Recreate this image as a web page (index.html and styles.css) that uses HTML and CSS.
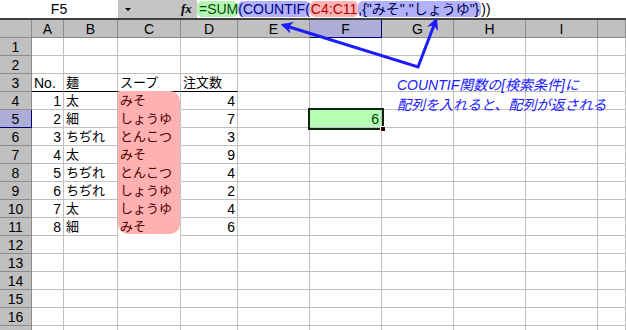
FILE: index.html
```html
<!DOCTYPE html>
<html>
<head>
	<meta charset="utf-8">
	<title>COUNTIF</title>
	<link rel="stylesheet" href="styles.css">
</head>
<body>
<div class="page">
	<div class="fbar">
		<div class="namebox">F5</div>
		<div class="fbtns"><span class="drop"></span><span class="fx">fx</span></div>
		<div class="formula"><span class="hl hl_green">=SUM</span><span class="hl hl_blue">(COUNTIF(</span><span class="hl hl_pink">C4:C11</span><span class="hl hl_blue2">,{"みそ","しょうゆ"}</span><span class="tail">))</span></div>
	</div>

	<div class="sheet">
		<div class="ch corner"></div><div class="ch">A</div><div class="ch">B</div><div class="ch">C</div><div class="ch">D</div><div class="ch">E</div><div class="ch ch_sel">F</div><div class="ch">G</div><div class="ch">H</div><div class="ch">I</div><div class="ch"></div>

		<div class="rh">1</div><div class="c"></div><div class="c"></div><div class="c"></div><div class="c"></div><div class="c"></div><div class="c"></div><div class="c"></div><div class="c"></div><div class="c"></div><div class="c"></div>
		<div class="rh">2</div><div class="c"></div><div class="c"></div><div class="c"></div><div class="c"></div><div class="c"></div><div class="c"></div><div class="c"></div><div class="c"></div><div class="c"></div><div class="c"></div>
		<div class="rh">3</div><div class="c hd">No.</div><div class="c hd jp">麺</div><div class="c hd jp">スープ</div><div class="c hd jp">注文数</div><div class="c"></div><div class="c"></div><div class="c"></div><div class="c"></div><div class="c"></div><div class="c"></div>
		<div class="rh">4</div><div class="c num">1</div><div class="c jp">太</div><div class="c soup jp"><span class="t">みそ</span></div><div class="c num">4</div><div class="c"></div><div class="c"></div><div class="c"></div><div class="c"></div><div class="c"></div><div class="c"></div>
		<div class="rh rh_sel">5</div><div class="c num">2</div><div class="c jp">細</div><div class="c soup jp"><span class="t">しょうゆ</span></div><div class="c num">7</div><div class="c"></div><div class="c num active">6</div><div class="c"></div><div class="c"></div><div class="c"></div><div class="c"></div>
		<div class="rh">6</div><div class="c num">3</div><div class="c jp">ちぢれ</div><div class="c soup jp"><span class="t">とんこつ</span></div><div class="c num">3</div><div class="c"></div><div class="c"></div><div class="c"></div><div class="c"></div><div class="c"></div><div class="c"></div>
		<div class="rh">7</div><div class="c num">4</div><div class="c jp">太</div><div class="c soup jp"><span class="t">みそ</span></div><div class="c num">9</div><div class="c"></div><div class="c"></div><div class="c"></div><div class="c"></div><div class="c"></div><div class="c"></div>
		<div class="rh">8</div><div class="c num">5</div><div class="c jp">ちぢれ</div><div class="c soup jp"><span class="t">とんこつ</span></div><div class="c num">4</div><div class="c"></div><div class="c"></div><div class="c"></div><div class="c"></div><div class="c"></div><div class="c"></div>
		<div class="rh">9</div><div class="c num">6</div><div class="c jp">ちぢれ</div><div class="c soup jp"><span class="t">しょうゆ</span></div><div class="c num">2</div><div class="c"></div><div class="c"></div><div class="c"></div><div class="c"></div><div class="c"></div><div class="c"></div>
		<div class="rh">10</div><div class="c num">7</div><div class="c jp">太</div><div class="c soup jp"><span class="t">しょうゆ</span></div><div class="c num">4</div><div class="c"></div><div class="c"></div><div class="c"></div><div class="c"></div><div class="c"></div><div class="c"></div>
		<div class="rh">11</div><div class="c num">8</div><div class="c jp">細</div><div class="c soup jp"><span class="t">みそ</span></div><div class="c num">6</div><div class="c"></div><div class="c"></div><div class="c"></div><div class="c"></div><div class="c"></div><div class="c"></div>
		<div class="rh">12</div><div class="c"></div><div class="c"></div><div class="c"></div><div class="c"></div><div class="c"></div><div class="c"></div><div class="c"></div><div class="c"></div><div class="c"></div><div class="c"></div>
		<div class="rh">13</div><div class="c"></div><div class="c"></div><div class="c"></div><div class="c"></div><div class="c"></div><div class="c"></div><div class="c"></div><div class="c"></div><div class="c"></div><div class="c"></div>
		<div class="rh">14</div><div class="c"></div><div class="c"></div><div class="c"></div><div class="c"></div><div class="c"></div><div class="c"></div><div class="c"></div><div class="c"></div><div class="c"></div><div class="c"></div>
		<div class="rh">15</div><div class="c"></div><div class="c"></div><div class="c"></div><div class="c"></div><div class="c"></div><div class="c"></div><div class="c"></div><div class="c"></div><div class="c"></div><div class="c"></div>
		<div class="rh">16</div><div class="c"></div><div class="c"></div><div class="c"></div><div class="c"></div><div class="c"></div><div class="c"></div><div class="c"></div><div class="c"></div><div class="c"></div><div class="c"></div>
		<div class="rh"></div><div class="c"></div><div class="c"></div><div class="c"></div><div class="c"></div><div class="c"></div><div class="c"></div><div class="c"></div><div class="c"></div><div class="c"></div><div class="c"></div>
	</div>

	<!-- highlight on C4:C11 -->
	<div class="range_pink"></div>

	<div class="note">COUNTIF関数の[検索条件]に<br>配列を入れると、配列が返される</div>

	<svg class="arrows" width="626" height="330" viewBox="0 0 626 330">
		<defs>
			<marker id="head" viewBox="0 0 10 10" refX="8" refY="5" markerWidth="4" markerHeight="4" orient="auto-start-reverse">
				<path d="M0,0 L10,5 L0,10 L3,5 z" fill="#1c1cff"/>
			</marker>
		</defs>
		<polyline points="283,25 418,67 436,20" fill="none" stroke="#1c1cff" stroke-width="3" stroke-linejoin="miter" marker-start="url(#head)" marker-end="url(#head)"/>
	</svg>
</div>
</body>
</html>
```

FILE: styles.css
```css
html, body
{
	margin: 0;
	padding: 0;
	background: white;
}

.page
{
	position: relative;
	width: 626px;
	height: 330px;
	overflow: hidden;
	font-family: "Liberation Sans", "Noto Sans CJK JP", sans-serif;
	font-size: 14px;
	color: black;
}

/* formula bar */
.fbar
{
	display: flex;
	height: 18px;
	border-bottom: 2px solid #404040;
	box-sizing: content-box;
}

.namebox
{
	width: 118px;
	text-align: center;
	line-height: 18px;
	background: white;
}

.fbtns
{
	width: 79px;
	background: #c4c4c4;
	position: relative;
}

.drop
{
	position: absolute;
	left: 7px;
	top: 8px;
	border-left: 3px solid transparent;
	border-right: 3px solid transparent;
	border-top: 3px solid black;
}

.fx
{
	position: absolute;
	left: 63px;
	top: 0;
	line-height: 18px;
	font-family: "Liberation Serif", serif;
	font-style: italic;
	font-weight: bold;
	font-size: 13px;
}

.formula
{
	flex: 1;
	display: flex;
	align-items: center;
	white-space: nowrap;
	background: white;
}

.hl
{
	height: 16px;
	line-height: 16px;
	border-radius: 5px;
}

.hl_green
{
	background: #b4f4b4;
	color: #005000;
	padding-left: 2px;
}

.hl_blue
{
	background: #b2b2fa;
	color: #000080;
}

.hl_pink
{
	background: #ffb4b4;
	color: #b00000;
	padding: 0 1px;
}

.hl_blue2
{
	background: #b2b2fa;
	color: #000050;
	padding-right: 2px;
}

.tail
{
	color: #000;
}

/* sheet grid */
.sheet
{
	display: grid;
	grid-template-columns: 32px 32px 54px 63px 57px 72px 72px 72px 72px 72px 28px;
	grid-auto-rows: 18px;
}

.ch, .rh
{
	background: #c0c0c0;
	border-right: 1px solid #8a8a8a;
	border-bottom: 1px solid #8a8a8a;
	box-sizing: border-box;
	text-align: center;
	line-height: 18px;
}

.ch_sel, .rh_sel
{
	background: #adadd8;
	border-right-color: #000070;
	border-bottom-color: #000070;
}

.c
{
	border-right: 1px solid #c0c0c0;
	border-bottom: 1px solid #c0c0c0;
	box-sizing: border-box;
	line-height: 18px;
	padding: 0 2px;
	white-space: nowrap;
	overflow: visible;
}

.jp
{
	font-size: 13px;
	line-height: 17px;
}

.hd
{
	border-bottom-color: black;
}

.num
{
	text-align: right;
}

.soup
{
	border-bottom-color: transparent;
}

.t
{
	position: relative;
	z-index: 2;
	color: #500000;
}

.active
{
	background: #b4ffb4;
	color: #004000;
	outline: 2px solid #102410;
	outline-offset: 0;
	position: relative;
	z-index: 3;
}

.active::after
{
	content: "";
	position: absolute;
	right: -5px;
	bottom: -5px;
	width: 6px;
	height: 6px;
	background: #300000;
	border: 1px solid white;
	box-sizing: border-box;
}

.range_pink
{
	position: absolute;
	left: 118px;
	top: 91px;
	width: 62px;
	height: 143px;
	background: #ffb0b0;
	border-radius: 2px 10px 10px 10px;
	z-index: 1;
}

.note
{
	position: absolute;
	left: 397px;
	top: 75px;
	line-height: 20px;
	font-size: 14px;
	font-style: italic;
	color: #2020ff;
	white-space: nowrap;
	z-index: 4;
}

.arrows
{
	position: absolute;
	left: 0;
	top: 0;
	z-index: 5;
}
```
